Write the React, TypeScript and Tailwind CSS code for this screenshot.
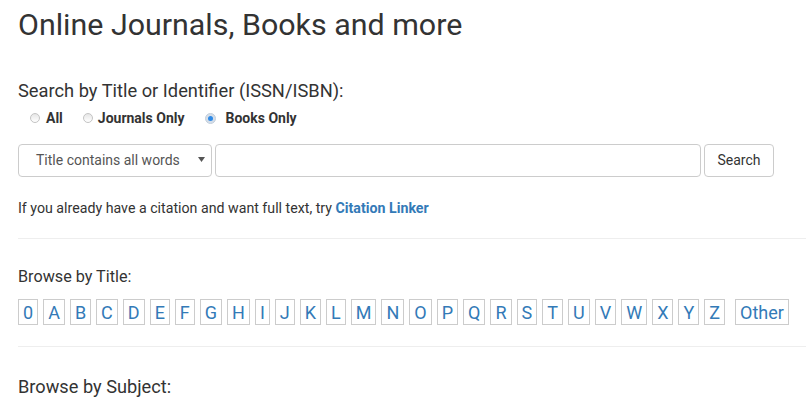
const letters = [
  "0", "A", "B", "C", "D", "E", "F", "G", "H", "I", "J", "K", "L", "M",
  "N", "O", "P", "Q", "R", "S", "T", "U", "V", "W", "X", "Y", "Z",
];

function Radio({ checked }: { checked?: boolean }) {
  if (checked) {
    return (
      <span className="w-[11px] h-[11px] rounded-full bg-[#d5dee9] border border-[#c3cfdc] flex items-center justify-center">
        <span className="w-[5px] h-[5px] rounded-full bg-[#2f8ae6]" />
      </span>
    );
  }
  return (
    <span className="w-[10px] h-[10px] rounded-full border border-[#c4c4c4] bg-gradient-to-b from-[#e6e6e6] to-white" />
  );
}

export default function App() {
  return (
    <div className="w-[806px] h-[409px] overflow-hidden bg-white pl-[18px] font-['Roboto',sans-serif] text-[#333]">
      <h1 className="mt-[10px] text-[30.4px] leading-[30px] text-[#333]">
        Online Journals, Books and more
      </h1>

      <p className="mt-[41px] text-[18.3px] leading-[20px]">
        Search by Title or Identifier (ISSN/ISBN):
      </p>

      <div className="mt-[8px] flex items-center h-[18px] pl-[12px] text-[14px] font-bold">
        <label className="flex items-center gap-[6px]">
          <Radio />
          All
        </label>
        <label className="flex items-center gap-[5px] ml-[20px]">
          <Radio />
          Journals Only
        </label>
        <label className="flex items-center gap-[10px] ml-[20px]">
          <Radio checked />
          Books Only
        </label>
      </div>

      <div className="mt-[17px] flex items-center h-[33px] gap-[3px]">
        <div className="w-[194px] h-[33px] border border-[#ccc] rounded-[4px] flex items-center pl-[17px] pr-[6px] text-[14px] text-[#555]">
          <span className="flex-1">Title contains all words</span>
          <svg width="7" height="5" viewBox="0 0 7 5" className="mb-[2px]">
            <path d="M0 0h7L3.5 5z" fill="#555" />
          </svg>
        </div>
        <div className="w-[486px] h-[33px] border border-[#ccc] rounded-[4px]" />
        <button className="w-[70px] h-[33px] border border-[#ccc] rounded-[4px] bg-white text-[14px] text-[#333]">
          Search
        </button>
      </div>

      <p className="mt-[21px] text-[14.2px] leading-[20px]">
        If you already have a citation and want full text, try{" "}
        <a className="font-bold text-[#337ab7]">Citation Linker</a>
      </p>

      <hr className="mt-[20px] border-0 border-t border-[#eee]" />

      <p className="mt-[28px] text-[16.2px] leading-[20px]">Browse by Title:</p>

      <div className="mt-[12px] flex items-center gap-[5px]">
        {letters.map((l) => (
          <a
            key={l}
            className="h-[26px] border border-[#ccc] px-[4px] flex items-center justify-center text-[18px] text-[#337ab7]"
          >
            {l}
          </a>
        ))}
        <a className="ml-[5px] h-[26px] border border-[#ccc] px-[4px] flex items-center text-[18px] text-[#337ab7]">
          Other
        </a>
      </div>

      <hr className="mt-[21px] border-0 border-t border-[#eee]" />

      <p className="mt-[30px] text-[18.2px] leading-[20px]">Browse by Subject:</p>
    </div>
  );
}
